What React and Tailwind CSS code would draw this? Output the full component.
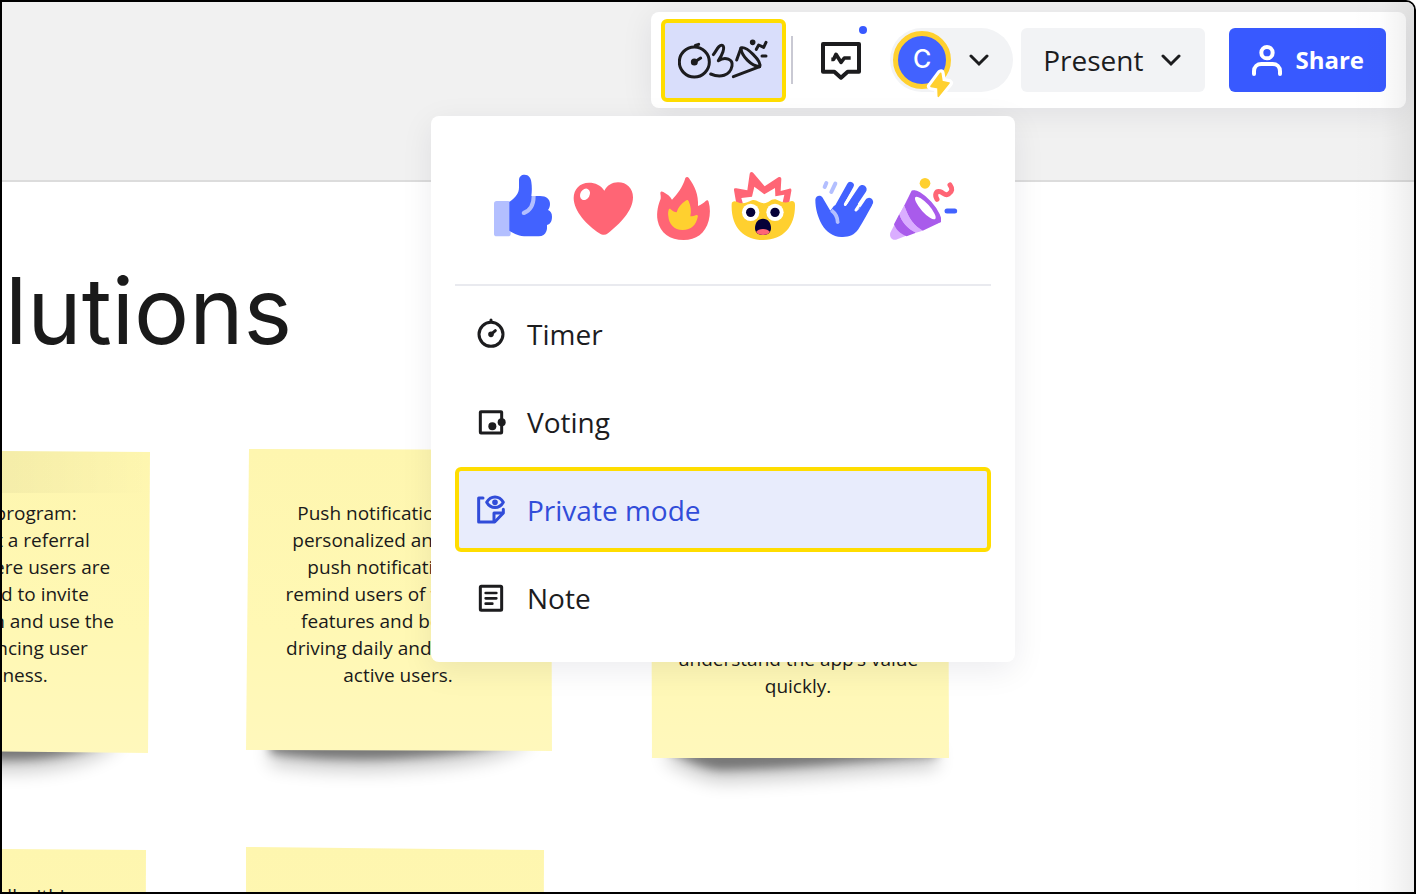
import React from 'react';

const PINK = '#FF6575';
const BLUE = '#4262FF';
const YELLOW = '#FFD02F';

const ThumbsUp = () => (
  <svg viewBox="9 24 240 240" className="w-20 h-20" aria-hidden="true">
    <rect x="42" y="123" width="50" height="106" rx="8" fill="#B3BFFF" />
    <path
      d="M88 126C108 112 117 100 117 82V60C117 50 124 44 134 44C146 44 153 54 154 66C156 80 156 94 154 108H180C200 108 210 118 210 132C210 140 208 145 204 150C212 153 216 160 216 170C216 182 212 192 201 195C201 202 202 206 199 214C195 224 188 229 176 229H140C118 229 104 222 88 212Z"
      fill={BLUE}
    />
    <path d="M161 108C161 136 150 152 131 159" fill="none" stroke="#B3BFFF" strokeWidth="12" />
    <circle cx="131" cy="159" r="6" fill="#B3BFFF" />
  </svg>
);

const Heart = () => (
  <svg viewBox="249 24 240 240" className="w-20 h-20" aria-hidden="true">
    <path
      d="M373 92C362 75 346 68 327 68C299 68 281 88 281 114C281 154 322 196 358 220C368 226 376 226 384 220C420 192 459 152 459 112C459 86 441 67 414 67C396 67 382 76 373 92Z"
      fill={PINK}
    />
    <ellipse cx="315" cy="103" rx="14" ry="18" transform="rotate(30 315 103)" fill="#fff" />
  </svg>
);

const Fire = () => (
  <svg viewBox="489 24 240 240" className="w-20 h-20" aria-hidden="true">
    <path
      d="M616 54C619 50 624 50 627 55C644 78 656 105 654 138C663 134 671 130 677 123C681 119 685 121 686 126C691 144 691 164 686 182C676 220 648 240 611 240C570 240 540 218 533 182C528 156 536 130 542 116C543 108 541 103 541 99C541 94 546 93 550 96C562 103 570 108 576 119C592 102 608 82 616 54Z"
      fill={PINK}
    />
    <path
      d="M617 122C620 119 624 119 626 124C632 138 635 152 631 169C638 169 644 167 649 165C653 164 655 167 653 172C648 196 634 210 608 210C582 210 567 193 565 169C564 162 564 156 566 149C567 146 570 146 572 148C578 154 584 156 590 157C594 142 604 130 617 122Z"
      fill={YELLOW}
    />
  </svg>
);

const MindBlown = () => (
  <svg viewBox="9 24 240 240" className="w-20 h-20" aria-hidden="true">
    <path
      d="M49 131L42 91C41 86 44 84 49 85L82 91L89 42C90 35 96 34 100 39L134 79L175 52C180 49 184 52 184 57L182 93L208 86C213 85 215 88 214 93L207 131Z"
      fill={PINK}
    />
    <path d="M70 136L64 114L96 110L103 80L133 103L165 84L166 109L193 104L186 136Z" fill="#fff" />
    <path
      d="M35 132C35 124 44 122 52 126C66 134 82 128 96 121C108 116 120 131 133 130C146 130 154 114 170 119C184 126 196 130 208 125C218 121 225 124 225 134C226 200 190 240 130 240C70 240 32 200 35 132Z"
      fill={YELLOW}
    />
    <circle cx="92" cy="157" r="26" fill="#fff" />
    <circle cx="165" cy="157" r="26" fill="#fff" />
    <circle cx="92" cy="157" r="14" fill="#050038" />
    <circle cx="165" cy="157" r="14" fill="#050038" />
    <path d="M129 176C144 176 153 188 153 204C153 218 144 225 129 225C114 225 105 218 105 204C105 188 114 176 129 176Z" fill="#050038" />
    <path d="M108 216C112 210 120 207 129 207C138 207 146 210 150 216C146 222 138 225 129 225C120 225 112 222 108 216Z" fill={PINK} />
  </svg>
);

const Wave = () => (
  <svg viewBox="249 24 240 240" className="w-20 h-20" aria-hidden="true">
    <g stroke={BLUE} strokeLinecap="round" fill="none">
      <path d="M350 150L391 76" strokeWidth="21" />
      <path d="M384 152L427 88" strokeWidth="26" />
      <path d="M412 178L447 126" strokeWidth="25" />
    </g>
    <path
      d="M286 119C287 107 301 103 308 113L331 152L342 137L374 128C368 137 376 142 382 134L402 118L422 142C412 152 404 160 414 151L457 134C444 158 430 184 415 208C402 226 386 232 364 231C338 230 318 214 306 194C294 172 286 146 286 119Z"
      fill={BLUE}
    />
    <path d="M376 133L398 97M408 150L424 126" stroke="#fff" strokeWidth="9" strokeLinecap="round" />
    <path d="M334 151C346 160 353 172 353 187" fill="none" stroke="#B3BFFF" strokeWidth="11" />
    <circle cx="353" cy="187" r="5" fill="#B3BFFF" />
    <path d="M319 69L314 81M346 71L334 96" stroke="#B3BFFF" strokeWidth="12" strokeLinecap="round" />
  </svg>
);

const Party = () => (
  <svg viewBox="489 24 240 240" className="w-20 h-20" aria-hidden="true">
    <path d="M575 92C600 86 668 160 663 186L528 239C516 242 507 230 511 218Z" fill="#DAADFF" />
    <path d="M575 92C600 86 668 160 663 186L608 212C584 198 566 176 553 137Z" fill="#A95BEB" />
    <path d="M538 162C545 186 562 206 588 218L560 229C540 222 528 208 522 193Z" fill="#A95BEB" />
    <path d="M553 137C566 176 584 198 608 212L588 218C562 206 545 186 538 162Z" fill="#DAADFF" />
    <ellipse cx="619" cy="139" rx="20" ry="62" transform="rotate(-42 619 139)" fill="#A95BEB" />
    <ellipse cx="616" cy="144" rx="13" ry="44" transform="rotate(-42 616 144)" fill="#fff" />
    <circle cx="615" cy="70" r="16" fill={YELLOW} />
    <path d="M651 118C643 104 648 92 660 95C672 99 676 109 686 102C697 95 698 86 690 75" fill="none" stroke={PINK} strokeWidth="15" strokeLinecap="round" />
    <path d="M681 153H704" stroke={BLUE} strokeWidth="15" strokeLinecap="round" />
  </svg>
);

const FacilitationIcon = () => (
  <svg viewBox="114 115 270 126" className="w-[90px] h-[42px]" fill="none" stroke="#1C1C1E" strokeWidth="9" strokeLinecap="round" strokeLinejoin="round" aria-hidden="true">
    <circle cx="163" cy="184" r="45" />
    <path d="M166 134L176 131" />
    <path d="M164 184L182 172" />
    <circle cx="163" cy="184" r="6" fill="#1C1C1E" />
    <path d="M220 162C229 150 238 130 247 134C257 140 246 164 235 180C256 166 280 176 276 196C270 226 240 232 212 220" />
    <path d="M290 178L303 142C318 134 366 182 359 198L280 228" />
    <path d="M303 142C304 166 334 196 359 198" />
    <circle cx="338" cy="125" r="4" fill="#1C1C1E" />
    <path d="M349 146L356 133L371 140L378 125M366 166H378" />
  </svg>
);

const ActivityIcon = () => (
  <svg viewBox="543 120 120 120" className="w-10 h-10" fill="none" stroke="#1C1C1E" aria-hidden="true">
    <path d="M549 132H657V215H623L603 233L583 215H549Z" strokeWidth="12" strokeLinejoin="round" />
    <path d="M574 178H581L588 163L603 187L613 174H632" strokeWidth="11" strokeLinejoin="round" />
  </svg>
);

const Chevron = () => (
  <svg viewBox="0 0 20 20" className="w-5 h-5" fill="none" stroke="#1C1C1E" strokeWidth="3" aria-hidden="true">
    <path d="M2 6L10 14L18 6" strokeLinecap="round" />
  </svg>
);

const TimerIcon = () => (
  <svg viewBox="102 142 96 96" className="w-8 h-8" fill="none" stroke="#1C1C1E" strokeWidth="9" strokeLinecap="round" aria-hidden="true">
    <circle cx="153" cy="191" r="36" />
    <path d="M153 148V153M153 191L166 180" />
    <circle cx="153" cy="191" r="4" />
  </svg>
);

const VotingIcon = () => (
  <svg viewBox="102 407 96 96" className="w-8 h-8" fill="none" stroke="#1C1C1E" strokeWidth="9" aria-hidden="true">
    <rect x="121" y="424" width="64" height="64" rx="2" />
    <circle cx="157" cy="468" r="12" fill="#1C1C1E" stroke="none" />
    <circle cx="185" cy="456" r="12" fill="#1C1C1E" stroke="none" />
  </svg>
);

const PrivateIcon = () => (
  <svg viewBox="102 131 96 96" className="w-8 h-8" fill="none" stroke="#314CD9" strokeWidth="9" strokeLinecap="round" strokeLinejoin="round" aria-hidden="true">
    <path d="M129 143H116V215H164L190 188V177" />
    <path d="M162 213V188H188" />
    <path d="M140 156C152 135 178 135 190 156C178 177 152 177 140 156Z" />
    <circle cx="165" cy="156" r="4" fill="#314CD9" />
  </svg>
);

const NoteIcon = () => (
  <svg viewBox="102 395 96 96" className="w-8 h-8" fill="none" stroke="#1C1C1E" strokeWidth="9" strokeLinecap="round" aria-hidden="true">
    <rect x="121" y="408" width="64" height="72" rx="3" />
    <path d="M137 428H169M137 444H169M137 460H157" strokeWidth="8" />
  </svg>
);

const reactions = [
  { label: 'Thumbs up', Icon: ThumbsUp },
  { label: 'Heart', Icon: Heart },
  { label: 'Fire', Icon: Fire },
  { label: 'Mind blown', Icon: MindBlown },
  { label: 'Wave', Icon: Wave },
  { label: 'Celebrate', Icon: Party },
];

const menuItems = [
  { label: 'Timer', Icon: TimerIcon },
  { label: 'Voting', Icon: VotingIcon },
  { label: 'Private mode', Icon: PrivateIcon, active: true },
  { label: 'Note', Icon: NoteIcon },
];

// Sticky notes live on the free canvas, so each one carries its own spot.
// `paper` and `shadow` are drawn in the note's local pixels.
const stickies = [
  {
    key: 'referral',
    place: 'left-[-156px] top-[448px] w-[304px] h-[303px]',
    padding: 'pt-[50px]',
    paper: 'M0 0L304 2L302 303L0 300Z',
    shadow: 'M30 280H276C262 302 216 314 160 314L60 312Z',
    crease: true,
    lines: ['Referral program:', 'Implement a referral', 'program where users are', 'encouraged to invite', 'friends to join and use the', 'app, enhancing user', 'awareness.'],
  },
  {
    key: 'push',
    place: 'left-[244px] top-[447px] w-[306px] h-[302px]',
    padding: 'pt-[51px] pr-[2px]',
    paper: 'M3 0L305 1L306 302L0 301Z',
    shadow: 'M24 280H288C270 302 220 310 130 314C80 315 50 311 24 308Z',
    lines: ['Push notifications: Use', 'personalized and timely', 'push notifications to', 'remind users of the app’s', 'features and benefits,', 'driving daily and monthly', 'active users.'],
  },
  {
    key: 'onboarding',
    place: 'left-[649px] top-[458px] w-[298px] h-[298px]',
    padding: 'pt-[186px] pr-[4px]',
    paper: 'M0 0H297L298 298H1Z',
    shadow: 'M16 280H286V300C220 304 150 312 70 314C50 312 36 304 16 294Z',
    lines: ['understand the app’s value', 'quickly.'],
  },
  {
    key: 'lower-left',
    place: 'left-[-156px] top-[846px] w-[300px] h-[300px]',
    padding: 'pt-[35px]',
    paper: 'M0 0L300 2L299 300H0Z',
    lines: ['Rewards all within'],
  },
  {
    key: 'lower-middle',
    place: 'left-[244px] top-[845px] w-[298px] h-[300px]',
    padding: 'pt-[51px]',
    paper: 'M0 0L298 3L297 300H0Z',
    lines: [],
  },
];

const Sticky = ({ id, place, padding, paper, shadow, crease, lines }) => (
  <article className={`absolute ${place}`}>
    <svg className="absolute inset-0 w-full h-full overflow-visible" aria-hidden="true">
      <defs>
        <linearGradient id={`${id}-fill`} x1="0" y1="0" x2="0" y2="1">
          <stop offset="0" stopColor="#FEF6AF" />
          <stop offset="0.6" stopColor="#FFF8B4" />
          <stop offset="1" stopColor="#FFF8BC" />
        </linearGradient>
        <linearGradient id={`${id}-crease`} x1="0" y1="0" x2="1" y2="0">
          <stop offset="0.5" stopColor="#000" stopOpacity="0.04" />
          <stop offset="1" stopColor="#000" stopOpacity="0" />
        </linearGradient>
        <filter id={`${id}-soft`} x="-20%" y="-100%" width="140%" height="400%">
          <feGaussianBlur stdDeviation="9" />
        </filter>
        <filter id={`${id}-tight`} x="-20%" y="-100%" width="140%" height="400%">
          <feGaussianBlur stdDeviation="5" />
        </filter>
      </defs>
      {shadow && (
        <>
          <path d={shadow} fill="#000" opacity="0.2" filter={`url(#${id}-soft)`} transform="translate(0 8)" />
          <path d={shadow} fill="#000" opacity="0.42" filter={`url(#${id}-tight)`} transform="translate(0 -4)" />
        </>
      )}
      <path d={paper} fill={`url(#${id}-fill)`} />
      {crease && <path d="M0 0L304 2V43H0Z" fill={`url(#${id}-crease)`} />}
    </svg>
    <p className={`relative text-center whitespace-nowrap text-[19px] leading-[27px] text-[#1A1A1A] ${padding}`}>
      {lines.map((line) => (
        <span key={line} className="block">{line}</span>
      ))}
    </p>
  </article>
);

const Board = () => (
  <main className="absolute inset-0 overflow-hidden">
    <div className="h-[180px] bg-[#F1F1F1] border-b-2 border-[#DCDCDC]" />
    <h1 className="absolute left-[3px] top-[255px] font-['Inter',sans-serif] text-[92px] leading-[108px] text-[#1A1A1A]">lutions</h1>
    {stickies.map(({ key, ...note }) => (
      <Sticky key={key} id={key} {...note} />
    ))}
  </main>
);

const FacilitationMenu = () => (
  <div className="absolute top-full right-[391px] mt-2 w-[584px] px-6 pb-[22px] bg-white rounded-lg shadow-[0_8px_32px_rgba(5,0,56,0.08)]">
    <div className="flex justify-center pt-[52px] pb-9 border-b-2 border-[#E9EAEF]">
      {reactions.map(({ label, Icon }) => (
        <button key={label} type="button" aria-label={label}>
          <Icon />
        </button>
      ))}
    </div>
    <ul className="flex flex-col gap-[3px] pt-[5px]">
      {menuItems.map(({ label, Icon, active }) => (
        <li key={label}>
          <button
            type="button"
            className={`flex items-center gap-[21px] w-full h-[85px] pl-[15px] text-[28px] border-4 rounded-md ${
              active ? 'bg-[#E8ECFC] border-[#FFDD00] text-[#314CD9]' : 'border-transparent text-[#1C1C1E]'
            }`}
          >
            <Icon />
            {label}
          </button>
        </li>
      ))}
    </ul>
  </div>
);

const Toolbar = () => (
  <nav className="relative flex items-center h-24 pl-[10px] pr-5 bg-white rounded-lg shadow-[0_4px_32px_rgba(5,0,56,0.08)]">
    <button type="button" aria-label="Facilitation tools" className="flex items-center justify-center w-[125px] h-[83px] pr-[2px] bg-[#D9DEFB] border-4 border-[#FFDD00] rounded-md">
      <FacilitationIcon />
    </button>
    <div className="w-[2px] h-12 ml-[5px] bg-[#C9C9D3]" />
    <button type="button" aria-label="Activity" className="relative ml-7">
      <ActivityIcon />
      <span className="absolute -top-[14px] -right-[6px] w-2 h-2 rounded-full bg-[#3859FF]" />
    </button>
    <button type="button" className="flex items-center gap-[18px] w-[123px] h-16 ml-[29px] pl-[3px] bg-[#F2F3F5] rounded-full">
      <span className="relative flex items-center justify-center w-[58px] h-[58px] rounded-full bg-[#4262FF] border-5 border-[#FFD02F] font-['Inter',sans-serif] text-white text-[25px] font-medium">
        C
        <svg viewBox="165 201 96 96" className="absolute -right-[10px] -bottom-[15px] w-8 h-8" aria-hidden="true">
          <path
            d="M215 220L186 259L207 263L208 289L240 249L219 245Z"
            fill="#FFD02F"
            stroke="#fff"
            strokeWidth="24"
            strokeLinejoin="round"
          />
          <path d="M215 220L186 259L207 263L208 289L240 249L219 245Z" fill="#FFD02F" stroke="#FFD02F" strokeWidth="5" strokeLinejoin="round" />
        </svg>
      </span>
      <Chevron />
    </button>
    <button type="button" className="flex items-center gap-[18px] h-16 ml-2 pl-[22px] pr-6 bg-[#F2F3F5] rounded-md text-[28px] text-[#1C1C1E]">
      Present
      <Chevron />
    </button>
    <button type="button" className="flex items-center gap-3 h-16 ml-6 px-[22px] bg-[#3859FF] rounded-md text-2xl font-bold text-white">
      <svg viewBox="153 132 96 96" className="w-8 h-8" fill="none" stroke="#fff" strokeWidth="12" strokeLinecap="round" aria-hidden="true">
        <circle cx="201" cy="158" r="17" />
        <path d="M162 222V214C162 200 172 192 184 192H218C230 192 240 200 240 214V222" />
      </svg>
      Share
    </button>
    <FacilitationMenu />
  </nav>
);

export default function App() {
  return (
    <div className="relative h-screen overflow-hidden bg-white border-2 border-black rounded-tr-[10px] font-['Open_Sans','Noto_Sans',sans-serif]">
      <Board />
      <header className="relative flex justify-end pt-[10px] pr-2">
        <Toolbar />
      </header>
      {/* soft shade along the right edge */}
      <div className="absolute inset-y-0 right-0 w-16 pointer-events-none bg-linear-to-r from-transparent via-black/[0.01] to-black/[0.07]" />
    </div>
  );
}
